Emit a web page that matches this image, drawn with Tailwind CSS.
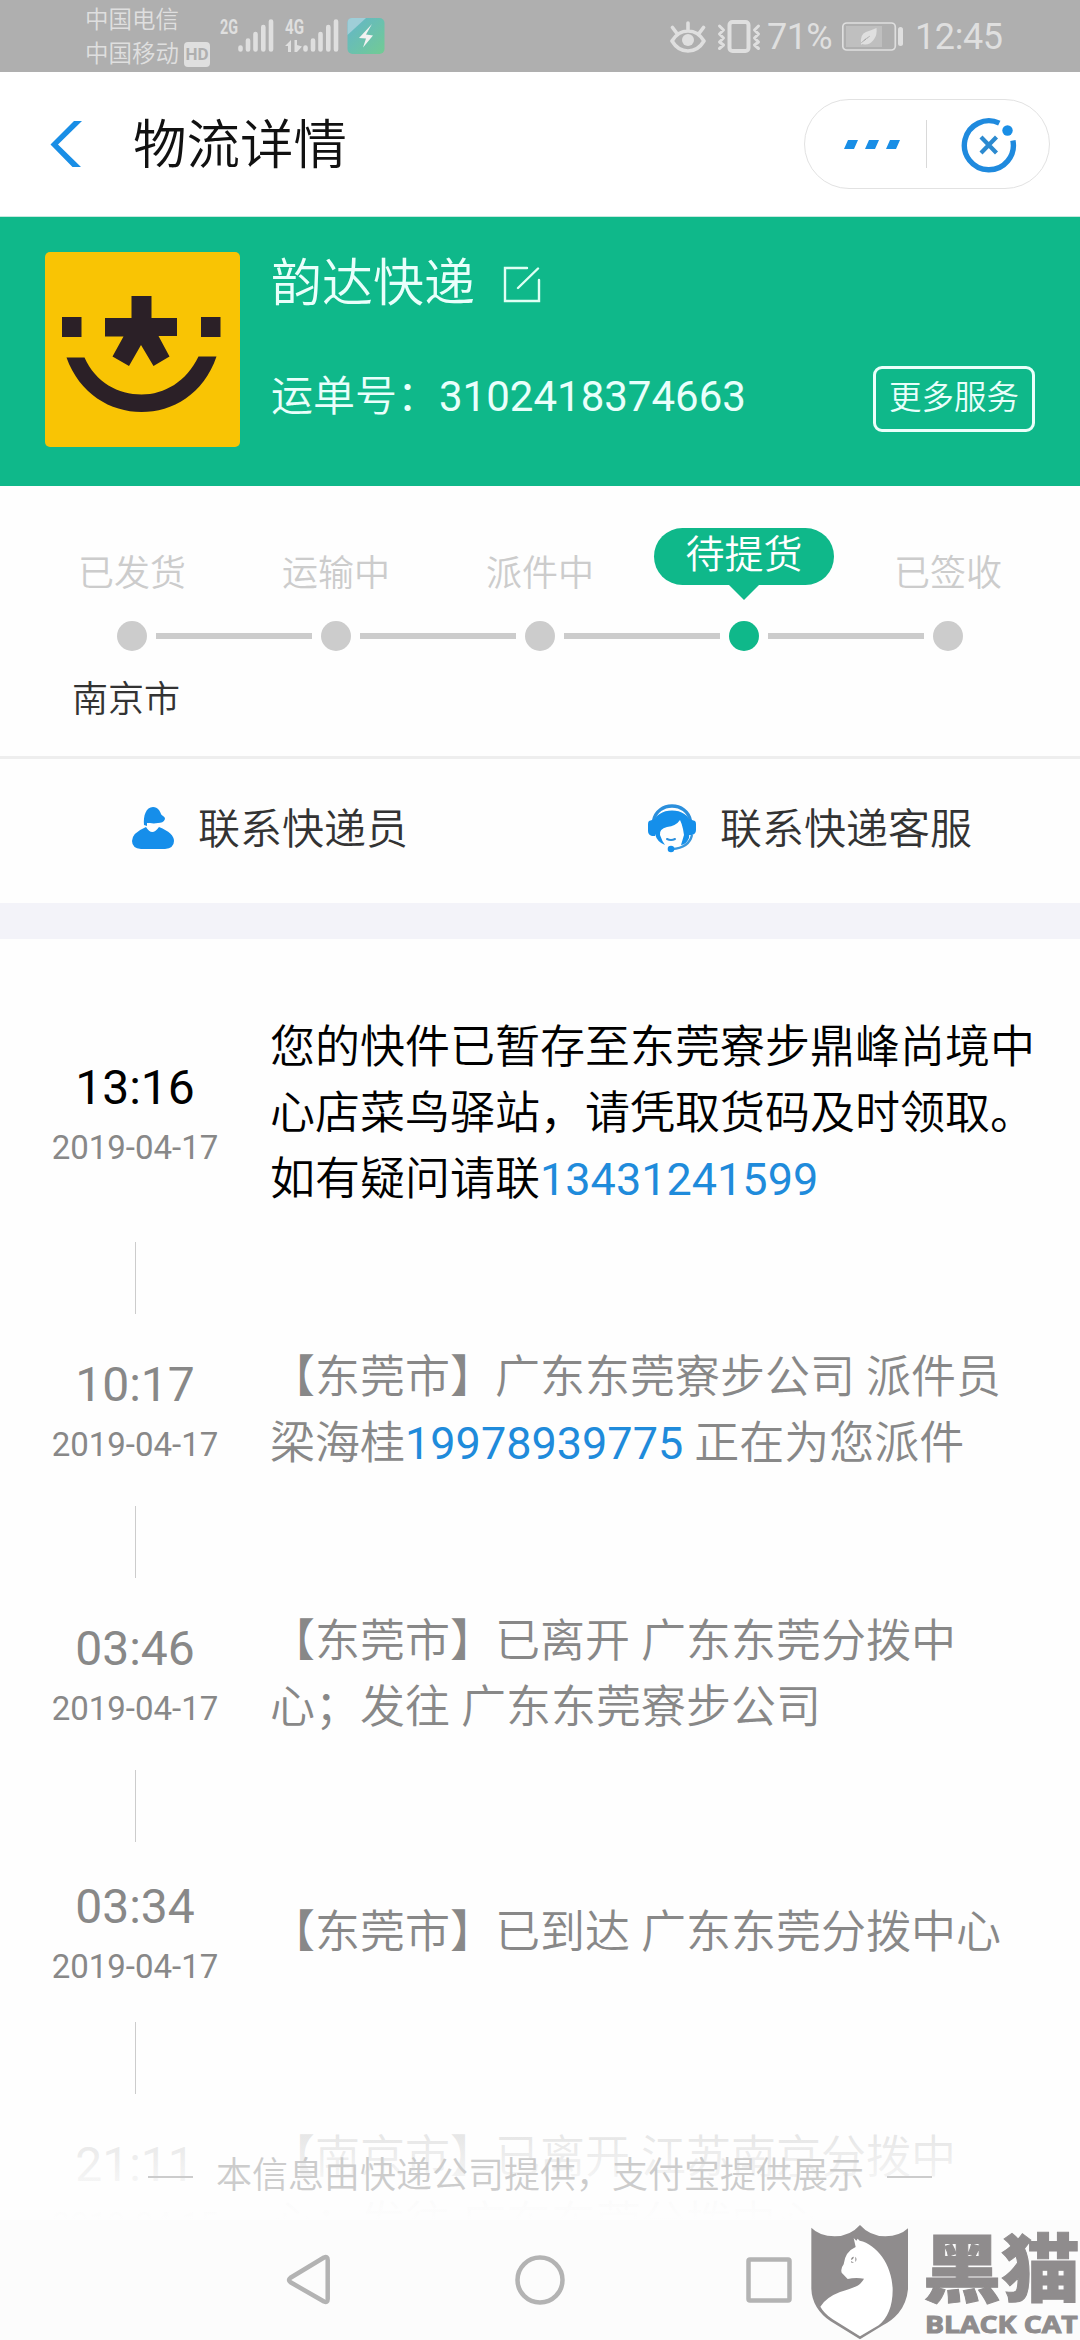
<!DOCTYPE html>
<html lang="zh-CN">
<head>
<meta charset="utf-8">
<title>物流详情</title>
<script src="https://cdn.jsdelivr.net/npm/@tailwindcss/browser@4"></script>
</head>
<body class="bg-white">
<div class="relative flex flex-col w-[1080px] h-[2340px] overflow-hidden bg-[#fefefe] font-['Roboto','Noto_Sans_CJK_SC',sans-serif] font-[350] whitespace-nowrap text-[#333]">

  <!-- status bar -->
  <div class="h-[72px] shrink-0 bg-[#afafaf] text-[#dfdfdf] flex items-center justify-between pl-[85px] pr-[78px]">
    <div class="flex h-[72px]">
      <div class="w-[135px] pt-[3px] text-[23.5px] leading-[34px]">
        <div>中国电信</div>
        <div class="flex items-center">中国移动
          <span class="ml-[5px] w-[26px] h-[25px] rounded-[4px] bg-[#dfdfdf] text-[#afafaf] text-[17px] leading-[25px] font-bold text-center">HD</span>
        </div>
      </div>
      <svg class="w-[165px] h-[72px]" viewBox="220 0 165 72" fill="#dfdfdf">
        <defs><linearGradient id="app" x1="0" y1="0" x2="1" y2="1"><stop offset="0" stop-color="#63b5cb"/><stop offset="1" stop-color="#72cb93"/></linearGradient></defs>
        <text x="220" y="34" font-size="21" font-weight="700" textLength="18" lengthAdjust="spacingAndGlyphs">2G</text>
        <g stroke="#dfdfdf" stroke-width="4.6" stroke-linecap="round">
          <path d="M240.5 47.5v2M248 40.500v9M255.500 34v15.500M263.300 27v22.500M271 21.500v28"/>
          <path d="M305.500 47.500v2M313 40.500v9M320.500 34v15.500M328.300 27v22.500M336 21.500v28"/>
        </g>
        <text x="285" y="34" font-size="21" font-weight="700" textLength="19" lengthAdjust="spacingAndGlyphs">4G</text>
        <path d="M291 40v12h-3v-6h-3zM294.500 40h2.500v5l5 1.500-5 5.500h-2.500z"/>
        <rect x="347.500" y="18" width="37" height="36" rx="5" fill="url(#app)"/>
        <path d="M352 18h14l-18.500 17v-12q0-5 4.500-5z" fill="#9fced8"/>
        <path d="M372 24l-13 14 7 .5-3 9 10-12-7-1z" fill="#f2f2f2"/>
      </svg>
    </div>
    <div class="flex items-center text-[36px] leading-[72px] font-normal">
      <svg class="w-[97px] h-[72px]" viewBox="670 0 97 72" fill="none" stroke="#dfdfdf" stroke-width="3.6" stroke-linecap="round" stroke-linejoin="round">
        <path d="M672 41q6-10 16-10t16 10q-6 10-16 10t-16-10zM688 23v7M672.500 27.500l4.500 6M703.500 27.500l-4.500 6"/>
        <circle cx="688" cy="40" r="6" fill="#dfdfdf" stroke="none"/>
        <rect x="729.500" y="22" width="19" height="29" rx="3" stroke-width="4"/>
        <path d="M719.500 26l4 4-4 4 4 4-4 4 4 3-4 3.500M758.500 26l-4 4 4 4-4 4 4 4-4 3 4 3.500" stroke-width="3"/>
      </svg>
      <span class="w-[75px] pt-[2px] tracking-[-0.6px]">71%</span>
      <svg class="w-[73px] h-[72px]" viewBox="842 0 73 72">
        <rect x="842.800" y="23" width="52.500" height="27" rx="4" fill="none" stroke="#dfdfdf" stroke-width="1.700"/>
        <rect x="846" y="26" width="36" height="21" fill="#bfbfbf"/>
        <path d="M861 44q-1-10 5-12t10.500-4q1 7-3 12t-9 4.500l-2.500-.5-.500 1z" fill="#dfdfdf"/>
        <path d="M861 43q4-4 9-7" stroke="#bfbfbf" stroke-width="1"/>
        <rect x="898" y="27" width="5" height="19" rx="2.500" fill="#dfdfdf"/>
      </svg>
      <span class="w-[87px] pt-[2px] tracking-[-0.4px]">12:45</span>
    </div>
  </div>

  <!-- title bar -->
  <div class="h-[144px] shrink-0 bg-white flex items-center pl-[50px] pr-[30px] border-b border-[#c5e9de] box-content w-[1000px]">
    <svg class="w-[33px] h-[48px]" viewBox="50 120 33 48"><path d="M74 121h8l-24 23.500L81 167h-8.500L50.500 144.500z" fill="#198ee6"/></svg>
    <h1 class="ml-[50px] text-[53.5px] leading-[72px] text-[#111] pt-[4px]">物流详情</h1>
    <div class="ml-auto w-[246px] h-[90px] rounded-full border border-[#e2e2e2]">
      <svg class="w-[244px] h-[88px]" viewBox="805 100 244 88">
        <path d="M848 140h10l-4 9h-10zM869 140h10l-4 9h-10zM890 140h10l-4 9h-10z" fill="#198ee6"/>
        <path d="M926.500 120v48" stroke="#d9d9d9"/>
        <path d="M999.300 123.100A24.500 24.500 0 1 0 1012.900 140.500" fill="none" stroke="#1f8ade" stroke-width="5.400"/>
        <circle cx="1007.500" cy="130.500" r="5.200" fill="#198ee6"/>
        <path d="M981 137l15.500 16M996.500 137l-15.500 16" stroke="#2c8ad0" stroke-width="4.200"/>
      </svg>
    </div>
  </div>

  <!-- courier card -->
  <div class="h-[269px] shrink-0 bg-[#0fb88a] text-[#e9fffb] flex pl-[45px] pt-[35px] pr-[45px]">
    <svg class="w-[195px] h-[195px] shrink-0" viewBox="45 252 195 195">
      <rect x="45" y="252" width="195" height="195" rx="5" fill="#f9c404"/>
      <g fill="#2b2027">
        <path d="M62 317h19.500v20H62zM201 317h19.500v20H201z"/>
        <path d="M131.500 296h20v22H177v18h-18.500l11 20.500-16 9.500-12.500-21-12 21-16.500-9.500 11-20h-18.500v-18.500h26.500z"/>
        <path d="M66.500 357.500h18c11 25 34 37 57 37s45-13 57-38h18c-13 38-44 55.500-75 55.500s-62-18-75-54.500z"/>
      </g>
    </svg>
    <div class="ml-[31px] flex-1 flex flex-col">
      <div class="flex items-center h-[60px]">
        <span class="text-[51px] leading-[60px] pt-[4px]">韵达快递</span>
        <svg class="ml-[28px] w-[38px] h-[38px] mt-[6px]" viewBox="503 267 38 38" fill="none" stroke="#e0fff4" stroke-width="2.400" stroke-linecap="round"><path d="M527 269h-22v33h34v-21M518 289l20-19.500"/></svg>
      </div>
      <div class="flex items-center justify-between mt-[54px] h-[66px]">
        <div class="text-[42px] leading-[66px] mt-[-4px]">运单号：<span class="font-normal">3102418374663</span></div>
        <div class="w-[162px] h-[66px] rounded-[9px] border-3 border-[#eafffa] text-center text-[32.500px] leading-[59px]">更多服务</div>
      </div>
    </div>
  </div>

  <!-- progress -->
  <div class="h-[270px] shrink-0 pt-[42px]">
    <div class="flex h-[77px] px-[30px] text-[36px] leading-[54px] text-[#ccc]">
      <div class="w-[204px] pt-[19px] text-center">已发货</div>
      <div class="w-[204px] pt-[19px] text-center">运输中</div>
      <div class="w-[204px] pt-[19px] text-center">派件中</div>
      <div class="w-[204px] flex flex-col items-center">
        <div class="w-[180px] h-[57px] shrink-0 rounded-full bg-[#0fb88a] text-white text-[39px] leading-[54px] text-center">待提货</div>
        <svg class="w-[30px] h-[15px] shrink-0" viewBox="0 0 30 15"><path d="M0 0h30L15 15z" fill="#0fb88a"/></svg>
      </div>
      <div class="w-[204px] pt-[19px] text-center">已签收</div>
    </div>
    <div class="mt-[15px] flex items-center gap-[9px] pl-[117px] h-[32px]">
      <i class="size-[30px] rounded-full bg-[#ccc]"></i><i class="w-[156px] h-[6px] bg-[#ccc]"></i>
      <i class="size-[30px] rounded-full bg-[#ccc]"></i><i class="w-[156px] h-[6px] bg-[#ccc]"></i>
      <i class="size-[30px] rounded-full bg-[#ccc]"></i><i class="w-[156px] h-[6px] bg-[#ccc]"></i>
      <i class="size-[30px] rounded-full bg-[#0fb88a]"></i><i class="w-[156px] h-[6px] bg-[#ccc]"></i>
      <i class="size-[30px] rounded-full bg-[#ccc]"></i>
    </div>
    <div class="pl-[72px] mt-[21px] text-[36px] leading-[54px]">南京市</div>
  </div>

  <!-- contacts -->
  <div class="h-[147px] shrink-0 border-t-3 border-[#eee] flex items-center text-[42px] leading-[60px]">
    <div class="flex items-center w-[648px] pl-[132px]">
      <svg class="w-[42px] h-[44px] mt-[-6px]" viewBox="132 806 42 44" fill="#168eea">
        <path d="M144 825c-1-9 2-18 9-18 5 0 7 4 8 7 1 2 4 2 4 5-1 3-4 4-7 4-4 1-9 0-11 0v3z"/>
        <path d="M146 827q6 10 13 0 15 6 15 14 0 7-9 8h-24q-9-1-9-8 0-8 14-14z"/>
      </svg>
      <span class="ml-[24px] mt-[-2px]">联系快递员</span>
    </div>
    <div class="flex items-center">
      <svg class="w-[48px] h-[49px] mt-[-6px]" viewBox="648 804 48 49">
        <path d="M653.500 821C657 801 687 801 690.500 821" fill="none" stroke="#2b8fdc" stroke-width="3.400"/>
        <path d="M654 824C654 806 690 806 690 824L689 838Q686 845 681 845L684 835L683 829Q682 824 680 820Q676 826 667 827Q659 829 660 835Q662 841 665 845Q657 842 655 834z" fill="#158fea"/>
        <path d="M649 821l6-2v17h-3q-4-1-4-5v-7q0-2 1-3zM695 821l-6-2v16h3q4-1 4-5v-6q0-2-1-3z" fill="#158fea"/>
        <path d="M667 839q4 2 8 0" fill="none" stroke="#2b8fdc" stroke-width="2" stroke-linecap="round"/>
        <path d="M692 835Q689 848 672 849" fill="none" stroke="#3a97dc" stroke-width="2.400"/>
        <circle cx="671" cy="849" r="3.300" fill="#158fea"/>
      </svg>
      <span class="ml-[24px] mt-[-2px]">联系快递客服</span>
    </div>
  </div>
  <div class="h-[36px] shrink-0 bg-[#f3f3f9]"></div>

  <!-- timeline -->
  <div class="h-[1281px] shrink-0 overflow-hidden pt-[45px] text-[45px] leading-[66px] text-[#888]">
    <div class="h-[258px] flex items-center text-black">
      <div class="w-[270px] pt-[3px] text-center font-normal"><div class="text-[48px] leading-[66px]">13:16</div><div class="text-[33px] leading-[54px] text-[#888]">2019-04-17</div></div>
      <div class="pt-[2px]">您的快件已暂存至东莞寮步鼎峰尚境中<br>心店菜鸟驿站，请凭取货码及时领取。<br>如有疑问请联<span class="font-normal text-[#1f8bdb]">13431241599</span></div>
    </div>
    <div class="ml-[135px] w-px h-[72px] bg-[#ccc]"></div>
    <div class="h-[192px] flex items-center">
      <div class="w-[270px] pt-[3px] text-center font-normal"><div class="text-[48px] leading-[66px]">10:17</div><div class="text-[33px] leading-[54px]">2019-04-17</div></div>
      <div class="pt-[2px]">【东莞市】广东东莞寮步公司 派件员<br>梁海桂<span class="font-normal text-[#1f8bdb]">19978939775</span> 正在为您派件</div>
    </div>
    <div class="ml-[135px] w-px h-[72px] bg-[#ccc]"></div>
    <div class="h-[192px] flex items-center">
      <div class="w-[270px] pt-[3px] text-center font-normal"><div class="text-[48px] leading-[66px]">03:46</div><div class="text-[33px] leading-[54px]">2019-04-17</div></div>
      <div class="pt-[2px]">【东莞市】已离开 广东东莞分拨中<br>心；发往 广东东莞寮步公司</div>
    </div>
    <div class="ml-[135px] w-px h-[72px] bg-[#ccc]"></div>
    <div class="h-[180px] flex items-center">
      <div class="w-[270px] pt-[3px] text-center font-normal"><div class="text-[48px] leading-[66px]">03:34</div><div class="text-[33px] leading-[54px]">2019-04-17</div></div>
      <div class="pt-[2px]">【东莞市】已到达 广东东莞分拨中心</div>
    </div>
    <div class="ml-[135px] w-px h-[72px] bg-[#ccc]"></div>
    <div class="h-[192px] flex items-center">
      <div class="w-[270px] pt-[3px] text-center font-normal"><div class="text-[48px] leading-[66px]">21:11</div><div class="text-[33px] leading-[54px]">2019-04-15</div></div>
      <div class="pt-[2px]">【南京市】已离开 江苏南京分拨中<br>心；发往 广东东莞分拨中心</div>
    </div>
  </div>

  <!-- provider note floating over the list -->
  <div class="absolute left-0 top-[2115px] w-full h-[105px] bg-linear-to-b from-[#fefefe]/75 via-[#fefefe]/97 via-80% to-[#fefefe] flex items-center justify-center gap-[23px] pt-[17px] text-[36px] leading-[54px] text-[#ccc]">
    <i class="w-[45px] h-[2px] bg-[#ccc] mt-[2px]"></i><span>本信息由快递公司提供，支付宝提供展示</span><i class="w-[45px] h-[2px] bg-[#ccc] mt-[2px]"></i>
  </div>

  <!-- navigation bar -->
  <div class="h-[120px] shrink-0 bg-[#fcfcfc]">
    <svg class="w-[1080px] h-[120px]" viewBox="0 2220 1080 120" fill="none" stroke="#b3b3b3" stroke-width="4.500" stroke-linejoin="round">
      <path d="M290.500 2277.700L324 2257.500Q327.700 2256 327.700 2260V2299Q327.700 2303 324 2301.500L290.500 2282.300Q287.500 2280 290.500 2277.700z"/>
      <circle cx="540" cy="2280" r="22.500"/>
      <rect x="748.500" y="2259.500" width="41" height="41" rx="1.500"/>
    </svg>
  </div>

  <!-- watermark -->
  <svg class="absolute left-[790px] top-[2210px] w-[290px] h-[130px]" viewBox="0 0 870 390" fill="#8f8c8d">
    <path d="M64 53Q88 78 134 79Q180 79 210 45Q240 79 286 79Q330 78 354 55V238Q350 280 325 310Q305 333 280 345L210 388L122 334Q66 295 64 236z"/>
    <path d="M191 84L199 92L203 86L209 92C262 103 308 168 308 240C308 290 292 325 266 346L210 379L128 328Q102 310 91 290Q108 262 150 246C185 234 208 232 222 206Q196 202 173 207L155 188Q151 176 161 163Q165 125 197 111z" fill="#fff"/>
    <path d="M183 150Q183 141 192 140L189 147zM196 140Q203 147 196 156zM183 153L192 158H184z"/>
    <g font-family="'Noto Sans CJK SC',sans-serif" font-weight="900" stroke="#8f8c8d" stroke-linejoin="miter">
      <text x="398" y="258" font-size="222" stroke-width="3" textLength="472" lengthAdjust="spacingAndGlyphs">黑猫</text>
    </g>
    <text x="405" y="368" font-family="'Open Sans',sans-serif" font-weight="700" font-size="69" stroke="#8f8c8d" stroke-width="3" textLength="458" lengthAdjust="spacingAndGlyphs">BLACK CAT</text>
  </svg>
</div>
</body>
</html>
